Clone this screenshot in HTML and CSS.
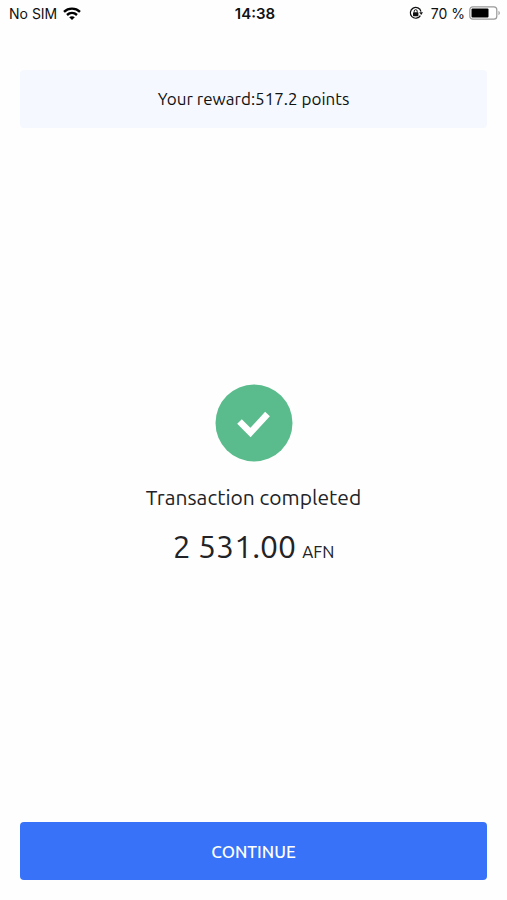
FILE: index.html
```
<!DOCTYPE html>
<html lang="en">
<head>
    <meta charset="UTF-8">
    <meta name="viewport" content="width=device-width, initial-scale=1.0">
    <title>Transaction completed</title>
    <link rel="stylesheet" href="styles.css">
</head>
<body>
    <header class="status-bar">
        <div class="status-left">
            <span>No SIM</span>
            <svg width="18" height="13" viewBox="0 0 18 13" fill="none" stroke="#000" stroke-width="2.4" aria-hidden="true">
                <path d="M1 4.8C5.5.6 12.5.6 17 4.8"/>
                <path d="M4 8c2.9-2.6 7.1-2.6 10 0"/>
                <path d="M9 13L6.2 10.2c1.6-1.4 4-1.4 5.6 0z" fill="#000" stroke="none"/>
            </svg>
        </div>
        <div class="status-time">14:38</div>
        <div class="status-right">
            <svg class="lock-icon" width="14" height="14" viewBox="0 0 14 14" fill="none" stroke="#111" aria-hidden="true">
                <path d="M11.4 9.6A5.4 5.4 0 1 1 12 5.6" stroke-width="1.2"/>
                <path d="M10.2 6.2h3.8L12.2 9z" fill="#111" stroke="none"/>
                <rect x="4" y="6.3" width="5.4" height="3.9" rx=".6" fill="#111" stroke="none"/>
                <path d="M5.2 6.5V5.2a1.5 1.5 0 0 1 3 0v1.3" stroke-width="1"/>
            </svg>
            <span>70 %</span>
            <svg width="32" height="14" viewBox="0 0 32 14" aria-hidden="true">
                <rect x=".8" y=".8" width="27" height="12.4" rx="3" fill="#fff" stroke="#999" stroke-width="1.2"/>
                <rect x="2.5" y="2.5" width="17" height="9" rx="1" fill="#000"/>
                <path d="M29.5 4.8c1.8.7 1.8 3.7 0 4.4z" fill="#999"/>
            </svg>
        </div>
    </header>
    <main class="container">
        <p class="reward">Your reward:517.2 points</p>
        <section class="result">
            <svg class="result-icon" viewBox="0 0 78 78" aria-hidden="true">
                <circle cx="39" cy="39" r="38.5" fill="#5abc8c"/>
                <path d="M24.5 37.5L35.5 48.5L52.5 30" fill="none" stroke="#fff" stroke-width="6.5"/>
            </svg>
            <h1>Transaction completed</h1>
            <p class="amount">2 531.00 <span class="currency">AFN</span></p>
        </section>
        <button type="button" class="continue">CONTINUE</button>
    </main>
</body>
</html>
```
FILE: styles.css
```
* {
    box-sizing: border-box;
}

body {
    display: flex;
    flex-direction: column;
    min-height: 100vh;
    margin: 0;
    background-color: #fefefe;
    color: #222326;
    font-family: "Ubuntu", "Noto Sans", sans-serif;
}

.status-bar {
    display: grid;
    grid-template-columns: 1fr auto 1fr;
    align-items: center;
    height: 26px;
    padding: 0 6px 0 9px;
    color: #111;
    font-family: "Inter", sans-serif;
    font-size: 14px;
}

.status-left,
.status-right {
    display: flex;
    align-items: center;
    gap: 6px;
}

.status-right {
    justify-content: flex-end;
    gap: 4px;
}

.lock-icon {
    margin-right: 4px;
}

.status-time {
    font-size: 15px;
    font-weight: 600;
}

.container {
    display: flex;
    flex: 1;
    flex-direction: column;
    padding: 44px 20px 20px;
}

.reward {
    margin: 0;
    padding: 17px;
    border-radius: 4px;
    background-color: #f5f9ff;
    color: #111;
    font-size: 17px;
    line-height: 24px;
    text-align: center;
}

.result {
    display: flex;
    flex: 1;
    flex-direction: column;
    align-items: center;
    justify-content: center;
    padding-top: 8px;
    text-align: center;
}

.result-icon {
    width: 78px;
    height: 78px;
}

h1 {
    margin: 20px 0 12px;
    font-size: 21px;
    font-weight: 400;
    line-height: 30px;
}

.amount {
    display: flex;
    align-items: baseline;
    gap: 6px;
    margin: 0;
    font-size: 32px;
    line-height: 44px;
}

.currency {
    font-size: 17px;
}

.continue {
    height: 58px;
    border: none;
    border-radius: 4px;
    background-color: #3772f8;
    color: #fff;
    font-family: inherit;
    font-size: 17px;
    font-weight: 500;
    cursor: pointer;
}
```
